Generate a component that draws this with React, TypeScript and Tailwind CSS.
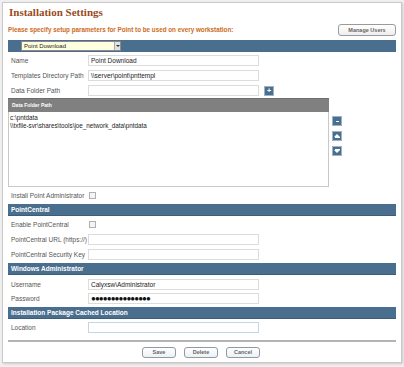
import React from "react";

const Label = ({ children }: { children: React.ReactNode }) => (
  <div className="w-[80px] pl-[3px] text-[6.5px] text-[#555] leading-[11px] whitespace-nowrap">{children}</div>
);

const Input = ({ value, blue }: { value?: React.ReactNode; blue?: boolean }) => (
  <div
    className={`w-[171px] h-[11px] border ${blue ? "border-[#c4d6e6]" : "border-[#dcdcdc]"} bg-white pl-[2px] text-[6.5px] leading-[9px] text-[#222] whitespace-nowrap overflow-hidden`}
  >
    {value}
  </div>
);

const Check = () => <div className="w-[7px] h-[7px] border border-[#b0b0b0] bg-[#f4f4f4] ml-[1px]" />;

const Bar = ({ children }: { children: React.ReactNode }) => (
  <div className="h-[12px] bg-[#4a6f8e] border-b border-[#3d5c78] pl-[3px] text-[6.5px] font-bold text-white leading-[11px]">
    {children}
  </div>
);

const SqBtn = ({ children }: { children: React.ReactNode }) => (
  <div className="w-[10px] h-[10px] bg-[#4a6f8e] border border-[#9fb3c6] flex items-center justify-center text-white text-[7px] leading-none font-bold">
    {children}
  </div>
);

const Btn = ({ children }: { children: React.ReactNode }) => (
  <div className="w-[34px] h-[11px] rounded-[3px] border border-[#8d9aa8] bg-gradient-to-b from-white to-[#eef0f3] text-[5.5px] font-bold text-[#666] flex items-center justify-center">
    {children}
  </div>
);

export default function App() {
  return (
    <div className="w-[404px] h-[367px] bg-[#efefef] pt-[2px] pl-[2px] font-['Liberation_Sans',Arial,sans-serif]">
      <div className="w-[400px] h-[361px] bg-white border border-[#c9c9c9] shadow-[1px_1px_2px_rgba(0,0,0,0.15)] px-[5px]">
        <div className="h-[18px] pt-[2px] pl-[1px] font-['Liberation_Serif',serif] font-bold text-[11px] leading-[14px] text-[#9b4a1b]">
          Installation Settings
        </div>
        <div className="mt-[3px] h-[12px] flex items-center justify-between">
          <div className="text-[6.3px] font-bold text-[#cc6b22] whitespace-nowrap">
            Please specify setup parameters for Point to be used on every workstation:
          </div>
          <div className="w-[58px] h-[12px] rounded-[3px] border border-[#9a9a9a] bg-gradient-to-b from-white to-[#eeeeee] text-[5.5px] font-bold text-[#666] flex items-center justify-center">
            Manage Users
          </div>
        </div>
        <div className="mt-[4px] h-[12px] bg-[#4a6f8e] pl-[13px] pt-[1px]">
          <div className="w-[100px] h-[10px] bg-[#ffffe0] border border-[#8a8a8a] flex items-center justify-between">
            <span className="pl-[2px] text-[6px] text-[#222] leading-none">Point Download</span>
            <div className="w-[6px] h-[8px] bg-[#e2e2e2] border-l border-[#aaa] flex items-center justify-center">
              <div className="w-0 h-0 border-l-[2px] border-r-[2px] border-t-[2px] border-l-transparent border-r-transparent border-t-[#333]" />
            </div>
          </div>
        </div>

        <div className="mt-[3px] flex items-center">
          <Label>Name</Label>
          <Input value="Point Download" />
        </div>
        <div className="mt-[4px] flex items-center">
          <Label>Templates Directory Path</Label>
          <Input value="\\server\point\pnttempl" />
        </div>
        <div className="mt-[4px] flex items-center">
          <Label>Data Folder Path</Label>
          <Input />
          <div className="ml-[5px]">
            <SqBtn>+</SqBtn>
          </div>
        </div>

        <div className="mt-[2px] flex">
          <div className="w-[321px]">
            <div className="h-[14px] bg-[#808080] border-t border-[#6d6d6d] pl-[4px] text-[5px] font-bold text-white leading-[13px]">
              Data Folder Path
            </div>
            <div className="h-[75px] border border-t-0 border-[#c8c8c8] pl-[1px] pt-[2px] text-[6.3px] leading-[8px] text-[#222]">
              <div>c:\pntdata</div>
              <div>\\txfile-svr\shares\tools\joe_network_data\pntdata</div>
            </div>
          </div>
          <div className="ml-[3px] pt-[18px] flex flex-col gap-[5px]">
            <SqBtn>
              <div className="w-[3px] h-[1px] bg-white" />
            </SqBtn>
            <SqBtn>
              <div className="flex flex-col items-center">
                <div className="w-0 h-0 border-l-[3px] border-r-[3px] border-b-[3px] border-l-transparent border-r-transparent border-b-white" />
                <div className="w-[5px] h-[1px] bg-white" />
              </div>
            </SqBtn>
            <SqBtn>
              <div className="flex flex-col items-center">
                <div className="w-[5px] h-[1px] bg-white" />
                <div className="w-0 h-0 border-l-[3px] border-r-[3px] border-t-[3px] border-l-transparent border-r-transparent border-t-white" />
              </div>
            </SqBtn>
          </div>
        </div>

        <div className="mt-[3px] h-[11px] flex items-center">
          <Label>Install Point Administrator</Label>
          <Check />
        </div>
        <div className="mt-[3px]">
          <Bar>PointCentral</Bar>
        </div>
        <div className="mt-[3px] h-[11px] flex items-center">
          <Label>Enable PointCentral</Label>
          <Check />
        </div>
        <div className="mt-[4px] flex items-center">
          <Label>PointCentral URL (https://)</Label>
          <Input />
        </div>
        <div className="mt-[4px] flex items-center">
          <Label>PointCentral Security Key</Label>
          <Input />
        </div>
        <div className="mt-[3px]">
          <Bar>Windows Administrator</Bar>
        </div>
        <div className="mt-[4px] flex items-center">
          <Label>Username</Label>
          <Input value="Calyxsw\Administrator" />
        </div>
        <div className="mt-[3px] flex items-center">
          <Label>Password</Label>
          <Input value={<span className="text-[8px] leading-[9px] tracking-[-0.9px] text-[#111]">●●●●●●●●●●●●●●●</span>} />
        </div>
        <div className="mt-[3px]">
          <Bar>Installation Package Cached Location</Bar>
        </div>
        <div className="mt-[3px] flex items-center">
          <Label>Location</Label>
          <Input blue />
        </div>
        <div className="mt-[7px] h-[2px] bg-[#b4b4b4]" />
        <div className="mt-[5px] flex justify-center gap-[8px] pr-[2px]">
          <Btn>Save</Btn>
          <Btn>Delete</Btn>
          <Btn>Cancel</Btn>
        </div>
      </div>
    </div>
  );
}
